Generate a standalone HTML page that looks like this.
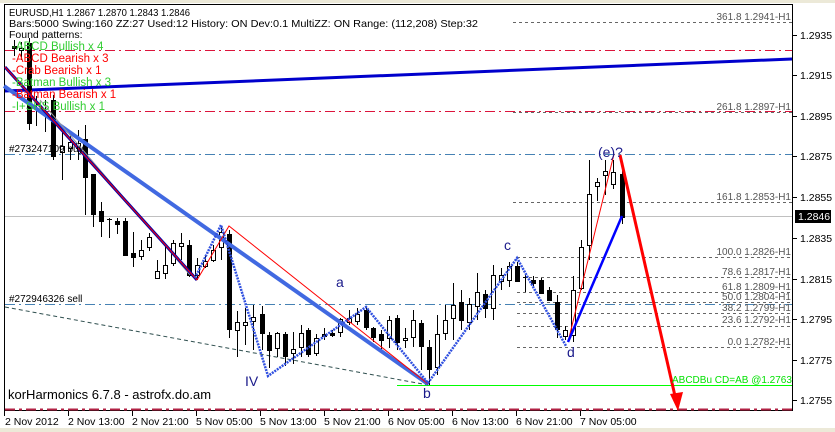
<!DOCTYPE html>
<html><head><meta charset="utf-8"><style>
html,body{margin:0;padding:0;background:#ece9d8;}
body{width:835px;height:432px;overflow:hidden;position:relative;font-family:"Liberation Sans",sans-serif;}
svg{position:absolute;left:0;top:0}
</style></head><body>
<svg width="835" height="432" viewBox="0 0 835 432" font-family="Liberation Sans, sans-serif">
<rect x="0" y="0" width="835" height="432" fill="#ece9d8"/>
<rect x="0" y="3" width="835" height="429" fill="#fff"/>
<rect x="4.5" y="4.5" width="788" height="406" fill="#fff" stroke="#000"/>
<g stroke-width="1" fill="none">
<line x1="5" y1="50.5" x2="792" y2="50.5" stroke="#dc143c" stroke-dasharray="10,4,2,4"/>
<line x1="5" y1="111.5" x2="792" y2="111.5" stroke="#dc143c" stroke-dasharray="10,4,2,4"/>
<line x1="5" y1="409.5" x2="792" y2="409.5" stroke="#b22244" stroke-width="2" stroke-dasharray="10,4,3,4"/>
<line x1="5" y1="154.5" x2="792" y2="154.5" stroke="#4682b4" stroke-dasharray="10,4,2,4"/>
<line x1="5" y1="304.5" x2="792" y2="304.5" stroke="#4682b4" stroke-dasharray="10,4,2,4"/>
<line x1="5" y1="216.5" x2="792" y2="216.5" stroke="#c0c0c0"/>
<line x1="397" y1="385.5" x2="792" y2="385.5" stroke="#00ff00"/>
<g stroke="#666" stroke-dasharray="3,3">
<line x1="513" y1="22.5" x2="792" y2="22.5"/>
<line x1="513" y1="112.5" x2="792" y2="112.5"/>
<line x1="513" y1="202.5" x2="792" y2="202.5"/>
<line x1="517" y1="257.5" x2="792" y2="257.5"/>
<line x1="517" y1="277.5" x2="792" y2="277.5"/>
<line x1="517" y1="292.5" x2="792" y2="292.5"/>
<line x1="517" y1="302.5" x2="792" y2="302.5"/>
<line x1="517" y1="313.5" x2="792" y2="313.5"/>
<line x1="517" y1="326.5" x2="792" y2="326.5"/>
<line x1="517" y1="347.5" x2="792" y2="347.5"/>
</g>
<line x1="5" y1="307" x2="428" y2="385" stroke="#2f4f4f" stroke-dasharray="4,3"/>
</g>
<line x1="5" y1="91" x2="792" y2="59" stroke="#0000cc" stroke-width="3"/>
<g stroke="#000" stroke-width="1">
<line x1="14.5" y1="40" x2="14.5" y2="56"/><rect x="12.5" y="46.5" width="4" height="2" fill="#000"/>
<line x1="21.5" y1="42" x2="21.5" y2="60"/><rect x="19.5" y="48.5" width="4" height="2" fill="#fff"/>
<rect x="27.5" y="43.5" width="4" height="80" fill="#000"/><line x1="29.5" y1="38" x2="29.5" y2="130"/>
<line x1="36.5" y1="96" x2="36.5" y2="126"/>
<line x1="45.5" y1="100" x2="45.5" y2="132"/>
<line x1="53.5" y1="95" x2="53.5" y2="160"/><rect x="51.5" y="100.5" width="4" height="56" fill="#000"/>
<line x1="62.5" y1="130" x2="62.5" y2="180"/><rect x="60.5" y="146.5" width="4" height="6" fill="#fff"/>
<line x1="70.5" y1="135" x2="70.5" y2="160"/><rect x="68.5" y="142.5" width="4" height="6" fill="#fff"/>
<line x1="78.5" y1="130" x2="78.5" y2="160"/><rect x="76.5" y="143.5" width="4" height="5" fill="#fff"/>
<line x1="85.5" y1="125" x2="85.5" y2="215"/><rect x="83.5" y="139.5" width="4" height="38" fill="#000"/>
<line x1="93.5" y1="174" x2="93.5" y2="227"/><rect x="91.5" y="174.5" width="4" height="40" fill="#000"/>
<line x1="101.5" y1="202" x2="101.5" y2="237"/><rect x="99.5" y="211.5" width="4" height="10" fill="#000"/>
<line x1="109.5" y1="218" x2="109.5" y2="238"/><line x1="107" y1="219.5" x2="112" y2="219.5"/>
<line x1="117.5" y1="218" x2="117.5" y2="234"/><rect x="115.5" y="221.5" width="4" height="3" fill="#000"/>
<line x1="125.5" y1="218" x2="125.5" y2="256"/><rect x="123.5" y="221.5" width="4" height="34" fill="#000"/>
<line x1="133.5" y1="232" x2="133.5" y2="267"/><rect x="131.5" y="253.5" width="4" height="4" fill="#000"/>
<line x1="141.5" y1="240" x2="141.5" y2="260"/><rect x="139.5" y="250.5" width="4" height="6" fill="#fff"/>
<line x1="149.5" y1="233" x2="149.5" y2="251"/><rect x="147.5" y="237.5" width="4" height="10" fill="#fff"/>
<line x1="157.5" y1="260" x2="157.5" y2="279"/><rect x="155.5" y="271.5" width="4" height="7" fill="#fff"/>
<line x1="165.5" y1="245" x2="165.5" y2="279"/><rect x="163.5" y="265.5" width="4" height="8" fill="#fff"/>
<line x1="173.5" y1="240" x2="173.5" y2="266"/><rect x="171.5" y="243.5" width="4" height="20" fill="#fff"/>
<line x1="181.5" y1="233" x2="181.5" y2="260"/><rect x="179.5" y="243.5" width="4" height="3" fill="#fff"/>
<line x1="189.5" y1="240" x2="189.5" y2="277"/><rect x="187.5" y="245.5" width="4" height="30" fill="#000"/>
<line x1="197.5" y1="258" x2="197.5" y2="280"/><rect x="195.5" y="265.5" width="4" height="10" fill="#fff"/>
<line x1="205.5" y1="255" x2="205.5" y2="268"/><rect x="203.5" y="261.5" width="4" height="5" fill="#fff"/>
<line x1="213.5" y1="245" x2="213.5" y2="262"/><rect x="211.5" y="250.5" width="4" height="10" fill="#fff"/>
<line x1="221.5" y1="226" x2="221.5" y2="260"/><rect x="219.5" y="232.5" width="4" height="15" fill="#fff"/>
<line x1="229.5" y1="230" x2="229.5" y2="338"/><rect x="227.5" y="234.5" width="4" height="95" fill="#000"/>
<line x1="237.5" y1="311" x2="237.5" y2="357"/><rect x="235.5" y="322.5" width="4" height="8" fill="#fff"/>
<line x1="245.5" y1="308" x2="245.5" y2="345"/><rect x="243.5" y="322.5" width="4" height="3" fill="#fff"/>
<line x1="253.5" y1="305" x2="253.5" y2="350"/><rect x="251.5" y="317.5" width="4" height="4" fill="#fff"/>
<line x1="262.5" y1="306" x2="262.5" y2="350"/><rect x="260.5" y="314.5" width="4" height="19" fill="#000"/>
<line x1="269.5" y1="332" x2="269.5" y2="368"/><rect x="267.5" y="335.5" width="4" height="15" fill="#000"/>
<line x1="277.5" y1="332" x2="277.5" y2="357"/><rect x="275.5" y="333.5" width="4" height="15" fill="#fff"/>
<line x1="285.5" y1="332" x2="285.5" y2="366"/><rect x="283.5" y="334.5" width="4" height="22" fill="#000"/>
<line x1="293.5" y1="332" x2="293.5" y2="364"/><rect x="291.5" y="349.5" width="4" height="4" fill="#fff"/>
<line x1="301.5" y1="325" x2="301.5" y2="357"/><rect x="299.5" y="333.5" width="4" height="14" fill="#fff"/>
<line x1="308.5" y1="328" x2="308.5" y2="357"/><rect x="306.5" y="330.5" width="4" height="24" fill="#000"/>
<line x1="316.5" y1="334" x2="316.5" y2="356"/><rect x="314.5" y="338.5" width="4" height="15" fill="#fff"/>
<line x1="324.5" y1="328" x2="324.5" y2="340"/><rect x="322.5" y="334.5" width="4" height="2" fill="#000"/>
<line x1="332.5" y1="330" x2="332.5" y2="337"/><rect x="330.5" y="333.5" width="4" height="2" fill="#000"/>
<line x1="340.5" y1="318" x2="340.5" y2="337"/><rect x="338.5" y="319.5" width="4" height="13" fill="#fff"/>
<line x1="349.5" y1="310" x2="349.5" y2="325"/><rect x="347.5" y="318.5" width="4" height="4" fill="#fff"/>
<line x1="357.5" y1="308" x2="357.5" y2="325"/><rect x="355.5" y="314.5" width="4" height="7" fill="#fff"/>
<line x1="366.5" y1="307" x2="366.5" y2="330"/><rect x="364.5" y="310.5" width="4" height="17" fill="#000"/>
<line x1="373.5" y1="327" x2="373.5" y2="342"/><rect x="371.5" y="328.5" width="4" height="9" fill="#000"/>
<line x1="381.5" y1="330" x2="381.5" y2="352"/><rect x="379.5" y="334.5" width="4" height="6" fill="#000"/>
<line x1="389.5" y1="316" x2="389.5" y2="348"/><rect x="387.5" y="320.5" width="4" height="18" fill="#fff"/>
<line x1="397.5" y1="315" x2="397.5" y2="350"/><rect x="395.5" y="318.5" width="4" height="24" fill="#000"/>
<line x1="405.5" y1="328" x2="405.5" y2="348"/><rect x="403.5" y="338.5" width="4" height="2" fill="#fff"/>
<line x1="413.5" y1="310" x2="413.5" y2="347"/><rect x="411.5" y="320.5" width="4" height="17" fill="#fff"/>
<line x1="421.5" y1="320" x2="421.5" y2="370"/><rect x="419.5" y="323.5" width="4" height="23" fill="#000"/>
<line x1="429.5" y1="340" x2="429.5" y2="385"/><rect x="427.5" y="347.5" width="4" height="22" fill="#000"/>
<line x1="437.5" y1="315" x2="437.5" y2="375"/><rect x="435.5" y="334.5" width="4" height="33" fill="#fff"/>
<line x1="445.5" y1="305" x2="445.5" y2="340"/><rect x="443.5" y="320.5" width="4" height="13" fill="#fff"/>
<line x1="453.5" y1="283" x2="453.5" y2="340"/><rect x="451.5" y="305.5" width="4" height="13" fill="#fff"/>
<line x1="461.5" y1="290" x2="461.5" y2="330"/><rect x="459.5" y="302.5" width="4" height="18" fill="#000"/>
<line x1="469.5" y1="298" x2="469.5" y2="330"/><rect x="467.5" y="304.5" width="4" height="18" fill="#fff"/>
<line x1="477.5" y1="273" x2="477.5" y2="320"/><rect x="475.5" y="292.5" width="4" height="14" fill="#fff"/>
<line x1="485.5" y1="290" x2="485.5" y2="318"/><rect x="483.5" y="294.5" width="4" height="14" fill="#000"/>
<line x1="493.5" y1="265" x2="493.5" y2="320"/><rect x="491.5" y="275.5" width="4" height="33" fill="#fff"/>
<line x1="501.5" y1="268" x2="501.5" y2="290"/><rect x="499.5" y="275.5" width="4" height="6" fill="#fff"/>
<line x1="509.5" y1="262" x2="509.5" y2="287"/><rect x="507.5" y="266.5" width="4" height="14" fill="#fff"/>
<line x1="517.5" y1="262" x2="517.5" y2="282"/><rect x="515.5" y="266.5" width="4" height="15" fill="#000"/>
<line x1="525.5" y1="275" x2="525.5" y2="292"/><line x1="523" y1="277.5" x2="528" y2="277.5"/>
<line x1="533.5" y1="276" x2="533.5" y2="286"/><rect x="531.5" y="280.5" width="4" height="3" fill="#000"/>
<line x1="541.5" y1="278" x2="541.5" y2="294"/><rect x="539.5" y="280.5" width="4" height="13" fill="#000"/>
<line x1="549.5" y1="287" x2="549.5" y2="301"/><rect x="547.5" y="290.5" width="4" height="10" fill="#000"/>
<line x1="557.5" y1="295" x2="557.5" y2="338"/><rect x="555.5" y="302.5" width="4" height="27" fill="#000"/>
<line x1="565.5" y1="326" x2="565.5" y2="340"/><rect x="563.5" y="330.5" width="4" height="6" fill="#fff"/>
<line x1="573.5" y1="276" x2="573.5" y2="342"/><rect x="571.5" y="290.5" width="4" height="45" fill="#fff"/>
<line x1="581.5" y1="240" x2="581.5" y2="290"/><rect x="579.5" y="247.5" width="4" height="41" fill="#fff"/>
<line x1="589.5" y1="160" x2="589.5" y2="260"/><rect x="587.5" y="194.5" width="4" height="51" fill="#fff"/>
<line x1="597.5" y1="178" x2="597.5" y2="201"/><rect x="595.5" y="182.5" width="4" height="4" fill="#fff"/>
<line x1="605.5" y1="160" x2="605.5" y2="195"/><rect x="603.5" y="171.5" width="4" height="4" fill="#fff"/>
<line x1="613.5" y1="160" x2="613.5" y2="189"/><rect x="611.5" y="172.5" width="4" height="12" fill="#fff"/>
<line x1="622.5" y1="168" x2="622.5" y2="224"/><rect x="620.5" y="174.5" width="4" height="43" fill="#000"/>
</g>
<line x1="4" y1="86" x2="428" y2="384" stroke="#4169e1" stroke-width="4"/>
<line x1="40" y1="100" x2="190" y2="275" stroke="#999" stroke-width="1"/>
<line x1="5" y1="67" x2="197" y2="280" stroke="#0000aa" stroke-width="3"/>
<line x1="5" y1="67" x2="197" y2="280" stroke="#ff0000" stroke-width="1"/>
<polyline points="197,280 229,226 428,384" fill="none" stroke="#ff0000" stroke-width="1"/>
<polyline points="195,278 221,225 268,376 366,307 428,383 517,258 566,346" fill="none" stroke="#3050e0" stroke-width="2.5" stroke-dasharray="2,1"/>
<line x1="568" y1="342" x2="614" y2="154" stroke="#ff0000" stroke-width="1"/>
<line x1="568" y1="342" x2="622" y2="216" stroke="#0000ff" stroke-width="2.5"/>
<line x1="620" y1="155" x2="675" y2="396" stroke="#ff0000" stroke-width="3"/>
<polygon points="670,394 683,392 678,411" fill="#ff0000"/>
<g font-size="14" fill="#1a1a8a">
<text x="336" y="287">a</text>
<text x="245" y="386">IV</text>
<text x="423" y="398">b</text>
<text x="504" y="250">c</text>
<text x="567" y="357">d</text>
<text x="598" y="157">(e)?</text>
</g>
<g font-size="10" fill="#000">
<text x="9" y="152">#273247109 buy</text>
<text x="9" y="302">#272946326 sell</text>
</g>
<g font-size="10" fill="#555" text-anchor="end">
<text x="791" y="20">361.8 1.2941-H1</text>
<text x="791" y="110">261.8 1.2897-H1</text>
<text x="791" y="200">161.8 1.2853-H1</text>
<text x="791" y="255">100.0 1.2826-H1</text>
<text x="791" y="275">78.6 1.2817-H1</text>
<text x="791" y="290">61.8 1.2809-H1</text>
<text x="791" y="300">50.0 1.2804-H1</text>
<text x="791" y="311">38.2 1.2799-H1</text>
<text x="791" y="323">23.6 1.2792-H1</text>
<text x="791" y="345">0.0 1.2782-H1</text>
</g>
<text x="672" y="383" font-size="10" fill="#00e000">ABCDBu CD=AB   @1.2763</text>
<text x="8" y="399" font-size="13" fill="#000">korHarmonics 6.7.8 - astrofx.do.am</text>
<g font-size="10.5" fill="#000">
<text x="9" y="16" textLength="181" lengthAdjust="spacingAndGlyphs">EURUSD,H1  1.2867 1.2870 1.2843 1.2846</text>
<text x="9" y="27" textLength="469" lengthAdjust="spacingAndGlyphs">Bars:5000  Swing:160  ZZ:27  Used:12  History: ON Dev:0.1  MultiZZ: ON  Range: (112,208)  Step:32</text>
<text x="9" y="38">Found patterns:</text>
</g>
<g font-size="11.5">
<text x="12" y="50" fill="#32cd32">-ABCD Bullish x 4</text>
<text x="12" y="62" fill="#ff0000">-ABCD Bearish x 3</text>
<text x="12" y="74" fill="#ff0000">-Crab Bearish x 1</text>
<text x="12" y="86" fill="#32cd32">-Batman Bullish x 3</text>
<text x="12" y="98" fill="#ff0000">-Batman Bearish x 1</text>
<text x="12" y="110" fill="#32cd32">-I+SHS Bullish x 1</text>
</g>
<g font-size="10.5" fill="#000">
<line x1="793" y1="35.5" x2="797" y2="35.5" stroke="#000"/><text x="800" y="39">1.2935</text>
<line x1="793" y1="75.5" x2="797" y2="75.5" stroke="#000"/><text x="800" y="79">1.2915</text>
<line x1="793" y1="116.5" x2="797" y2="116.5" stroke="#000"/><text x="800" y="120">1.2895</text>
<line x1="793" y1="156.5" x2="797" y2="156.5" stroke="#000"/><text x="800" y="160">1.2875</text>
<line x1="793" y1="197.5" x2="797" y2="197.5" stroke="#000"/><text x="800" y="201">1.2855</text>
<line x1="793" y1="238.5" x2="797" y2="238.5" stroke="#000"/><text x="800" y="242">1.2835</text>
<line x1="793" y1="279.5" x2="797" y2="279.5" stroke="#000"/><text x="800" y="283">1.2815</text>
<line x1="793" y1="319.5" x2="797" y2="319.5" stroke="#000"/><text x="800" y="323">1.2795</text>
<line x1="793" y1="360.5" x2="797" y2="360.5" stroke="#000"/><text x="800" y="364">1.2775</text>
<line x1="793" y1="400.5" x2="797" y2="400.5" stroke="#000"/><text x="800" y="404">1.2755</text>
<rect x="795" y="210" width="36" height="13" fill="#000"/><text x="798" y="220" fill="#fff">1.2846</text>
</g>
<g font-size="10.5" fill="#000">
<text x="5" y="425">2 Nov 2012</text>
<text x="68" y="425">2 Nov 13:00</text>
<text x="132" y="425">2 Nov 21:00</text>
<text x="196" y="425">5 Nov 05:00</text>
<text x="260" y="425">5 Nov 13:00</text>
<text x="324" y="425">5 Nov 21:00</text>
<text x="388" y="425">6 Nov 05:00</text>
<text x="452" y="425">6 Nov 13:00</text>
<text x="516" y="425">6 Nov 21:00</text>
<text x="580" y="425">7 Nov 05:00</text>
</g>
<g stroke="#000">
<line x1="4.5" y1="411" x2="4.5" y2="416"/><line x1="68.5" y1="411" x2="68.5" y2="416"/><line x1="132.5" y1="411" x2="132.5" y2="416"/><line x1="196.5" y1="411" x2="196.5" y2="416"/><line x1="260.5" y1="411" x2="260.5" y2="416"/><line x1="324.5" y1="411" x2="324.5" y2="416"/><line x1="388.5" y1="411" x2="388.5" y2="416"/><line x1="452.5" y1="411" x2="452.5" y2="416"/><line x1="516.5" y1="411" x2="516.5" y2="416"/><line x1="580.5" y1="411" x2="580.5" y2="416"/>
</g>
<rect x="0" y="428" width="835" height="4" fill="#ece9d8"/>
</svg>
</body></html>
